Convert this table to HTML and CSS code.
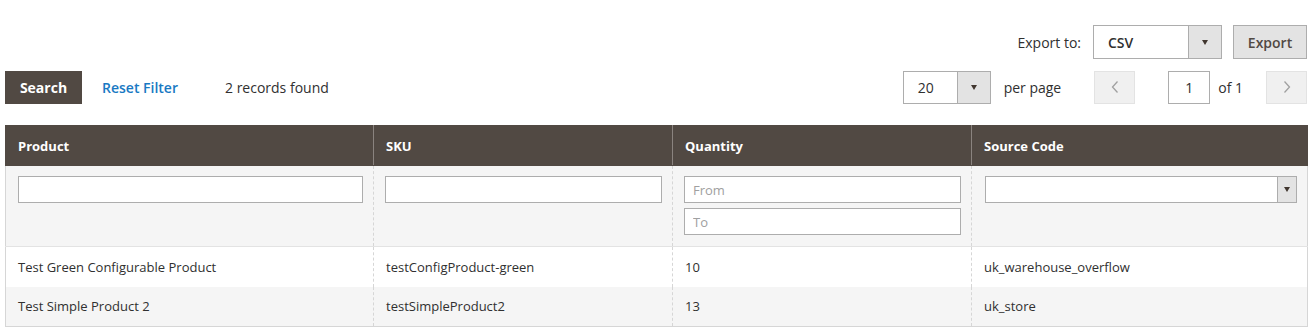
FILE: index.html
```html
<!DOCTYPE html>
<html lang="en">
<head>
<meta charset="utf-8">
<title>Source items grid</title>
<link rel="stylesheet" href="styles.css">
</head>
<body>
<div class="page">
  <div class="export-bar">
    <span class="export-label">Export to:</span>
    <div class="select select-csv">
      <span class="select-value">CSV</span>
      <span class="select-arrow"><i class="tri"></i></span>
    </div>
    <button class="btn-export">Export</button>
  </div>

  <div class="toolbar">
    <div class="toolbar-left">
      <button class="btn-search">Search</button>
      <a class="reset-link" href="#">Reset Filter</a>
      <span class="records">2 records found</span>
    </div>
    <div class="toolbar-right">
      <div class="select select-limit">
        <span class="select-value">20</span>
        <span class="select-arrow"><i class="tri"></i></span>
      </div>
      <span class="per-page">per page</span>
      <button class="pager-btn pager-prev"><svg width="8" height="14" viewBox="0 0 8 14"><path d="M6.5 1.5 L1.5 7 L6.5 12.5" fill="none" stroke="#a0a0a0" stroke-width="1.3"/></svg></button>
      <input class="page-input" type="text" value="1">
      <span class="of-pages">of 1</span>
      <button class="pager-btn pager-next"><svg width="8" height="14" viewBox="0 0 8 14"><path d="M1.5 1.5 L6.5 7 L1.5 12.5" fill="none" stroke="#a0a0a0" stroke-width="1.3"/></svg></button>
    </div>
  </div>

  <table class="grid">
    <colgroup>
      <col class="c1"><col class="c2"><col class="c3"><col class="c4">
    </colgroup>
    <thead>
      <tr class="head-row">
        <th>Product</th>
        <th>SKU</th>
        <th>Quantity</th>
        <th>Source Code</th>
      </tr>
      <tr class="filter-row">
        <td class="f1"><input class="filter-input" type="text"></td>
        <td class="f2"><input class="filter-input" type="text"></td>
        <td class="f3">
          <div class="range">
            <input class="filter-input" type="text" placeholder="From">
            <input class="filter-input" type="text" placeholder="To">
          </div>
        </td>
        <td class="f4">
          <div class="filter-select">
            <span class="fs-value"></span>
            <span class="fs-arrow"><i class="tri"></i></span>
          </div>
        </td>
      </tr>
    </thead>
    <tbody>
      <tr class="data-row odd">
        <td>Test Green Configurable Product</td>
        <td>testConfigProduct-green</td>
        <td>10</td>
        <td>uk_warehouse_overflow</td>
      </tr>
      <tr class="data-row even">
        <td>Test Simple Product 2</td>
        <td>testSimpleProduct2</td>
        <td>13</td>
        <td>uk_store</td>
      </tr>
    </tbody>
  </table>
</div>
</body>
</html>
```

FILE: styles.css
```css
* { box-sizing: border-box; }
html, body { margin: 0; padding: 0; background: #fff; }
body {
  font-family: "Open Sans", "Liberation Sans", sans-serif;
  color: #303030;
  font-size: 14px;
}
.page {
  padding: 25px 5px 0 5px;
}

/* export bar */
.export-bar {
  display: flex;
  justify-content: flex-end;
  align-items: center;
  height: 34px;
}
.export-label {
  font-size: 14px;
  margin-right: 12px;
}
.select {
  display: flex;
  height: 34px;
  border: 1px solid #adadad;
  background: #fff;
}
.select-value {
  flex: 1;
  display: flex;
  align-items: center;
  font-size: 14px;
}
.select-arrow {
  width: 33px;
  border-left: 1px solid #adadad;
  background: #e3e3e3;
  display: flex;
  align-items: center;
  justify-content: center;
}
.tri {
  display: block;
  width: 0;
  height: 0;
  border-left: 3px solid transparent;
  border-right: 3px solid transparent;
  border-top: 5px solid #41362f;
}
.select-csv { width: 129px; }
.select-csv .select-value { padding-left: 14px; font-weight: 600; }
.btn-export {
  margin-left: 11px;
  width: 74px;
  height: 34px;
  border: 1px solid #adadad;
  background: #e3e3e3;
  color: #514943;
  font-family: inherit;
  font-weight: 600;
  font-size: 14px;
  padding: 0;
}

/* toolbar */
.toolbar {
  display: flex;
  justify-content: space-between;
  align-items: center;
  margin-top: 11px;
  height: 34px;
}
.toolbar-left, .toolbar-right {
  display: flex;
  align-items: center;
}
.btn-search {
  width: 77px;
  height: 33px;
  background: #514943;
  border: 1px solid #514943;
  color: #fff;
  font-family: inherit;
  font-weight: 700;
  font-size: 14px;
  padding: 0;
}
.reset-link {
  margin-left: 20px;
  color: #1979c3;
  font-weight: 600;
  font-size: 14px;
  text-decoration: none;
}
.records {
  margin-left: 47px;
  font-size: 14px;
}
.select-limit { width: 88px; height: 33px; }
.select-limit .select-value { padding-left: 14px; }
.per-page {
  margin-left: 13px;
  font-size: 14px;
}
.pager-btn {
  width: 41px;
  height: 33px;
  border: 1px solid #e3e3e3;
  background: #f0f0f0;
  display: flex;
  align-items: center;
  justify-content: center;
  padding: 0;
}
.pager-prev { margin-left: 33px; }
.pager-next { margin-left: 23px; }
.page-input {
  margin-left: 33px;
  width: 42px;
  height: 33px;
  border: 1px solid #adadad;
  text-align: center;
  font-family: inherit;
  font-size: 14px;
  color: #303030;
  padding: 0;
}
.of-pages {
  margin-left: 8px;
  font-size: 14px;
}

/* grid */
.grid {
  margin-top: 21px;
  width: 1302px;
  border-collapse: collapse;
  table-layout: fixed;
  font-size: 13px;
}
.c1 { width: 368px; }
.c2 { width: 299px; }
.c3 { width: 299px; }
.c4 { width: 336px; }

.head-row th {
  background: #514943;
  color: #fff;
  font-weight: 700;
  text-align: left;
  height: 40px;
  padding: 0 12px;
  border-left: 1px solid #8a837f;
  border-right: 1px solid #8a837f;
  border-top: 1px solid #514943;
  border-bottom: 1px solid #514943;
}
.head-row th:first-child { border-left-color: #514943; }
.head-row th:last-child { border-right-color: #514943; }

.filter-row td {
  background: #f5f5f5;
  padding: 10px 10px 10px 11px;
  vertical-align: top;
  height: 81px;
  border-left: 1px dashed #d6d6d6;
  border-right: 1px dashed #d6d6d6;
  border-bottom: 1px solid #e3e3e3;
}
.filter-row td:first-child { border-left: 1px solid #d6d6d6; padding-left: 12px; }
.filter-row td:last-child { border-right: 1px solid #d6d6d6; padding-left: 13px; }
.filter-input {
  display: block;
  width: 100%;
  height: 27px;
  border: 1px solid #adadad;
  background: #fff;
  font-family: inherit;
  font-size: 13px;
  padding: 0 8px;
  color: #303030;
}
.filter-input::placeholder { color: #a0a0a0; }
.range {
  display: flex;
  flex-direction: column;
  gap: 5px;
}
.filter-select {
  display: flex;
  height: 27px;
  border: 1px solid #adadad;
  background: #fff;
}
.fs-value { flex: 1; }
.fs-arrow {
  width: 19px;
  border-left: 1px solid #adadad;
  background: #e3e3e3;
  display: flex;
  align-items: center;
  justify-content: center;
}

.data-row td {
  height: 40px;
  padding: 0 12px;
  border-left: 1px dashed #d6d6d6;
  border-right: 1px dashed #d6d6d6;
  color: #303030;
}
.data-row td:first-child { border-left: 1px solid #d6d6d6; }
.data-row td:last-child { border-right: 1px solid #d6d6d6; }
.data-row.odd td { background: #fff; }
.data-row.even td { background: #f5f5f5; border-bottom: 1px solid #d6d6d6; }
```
